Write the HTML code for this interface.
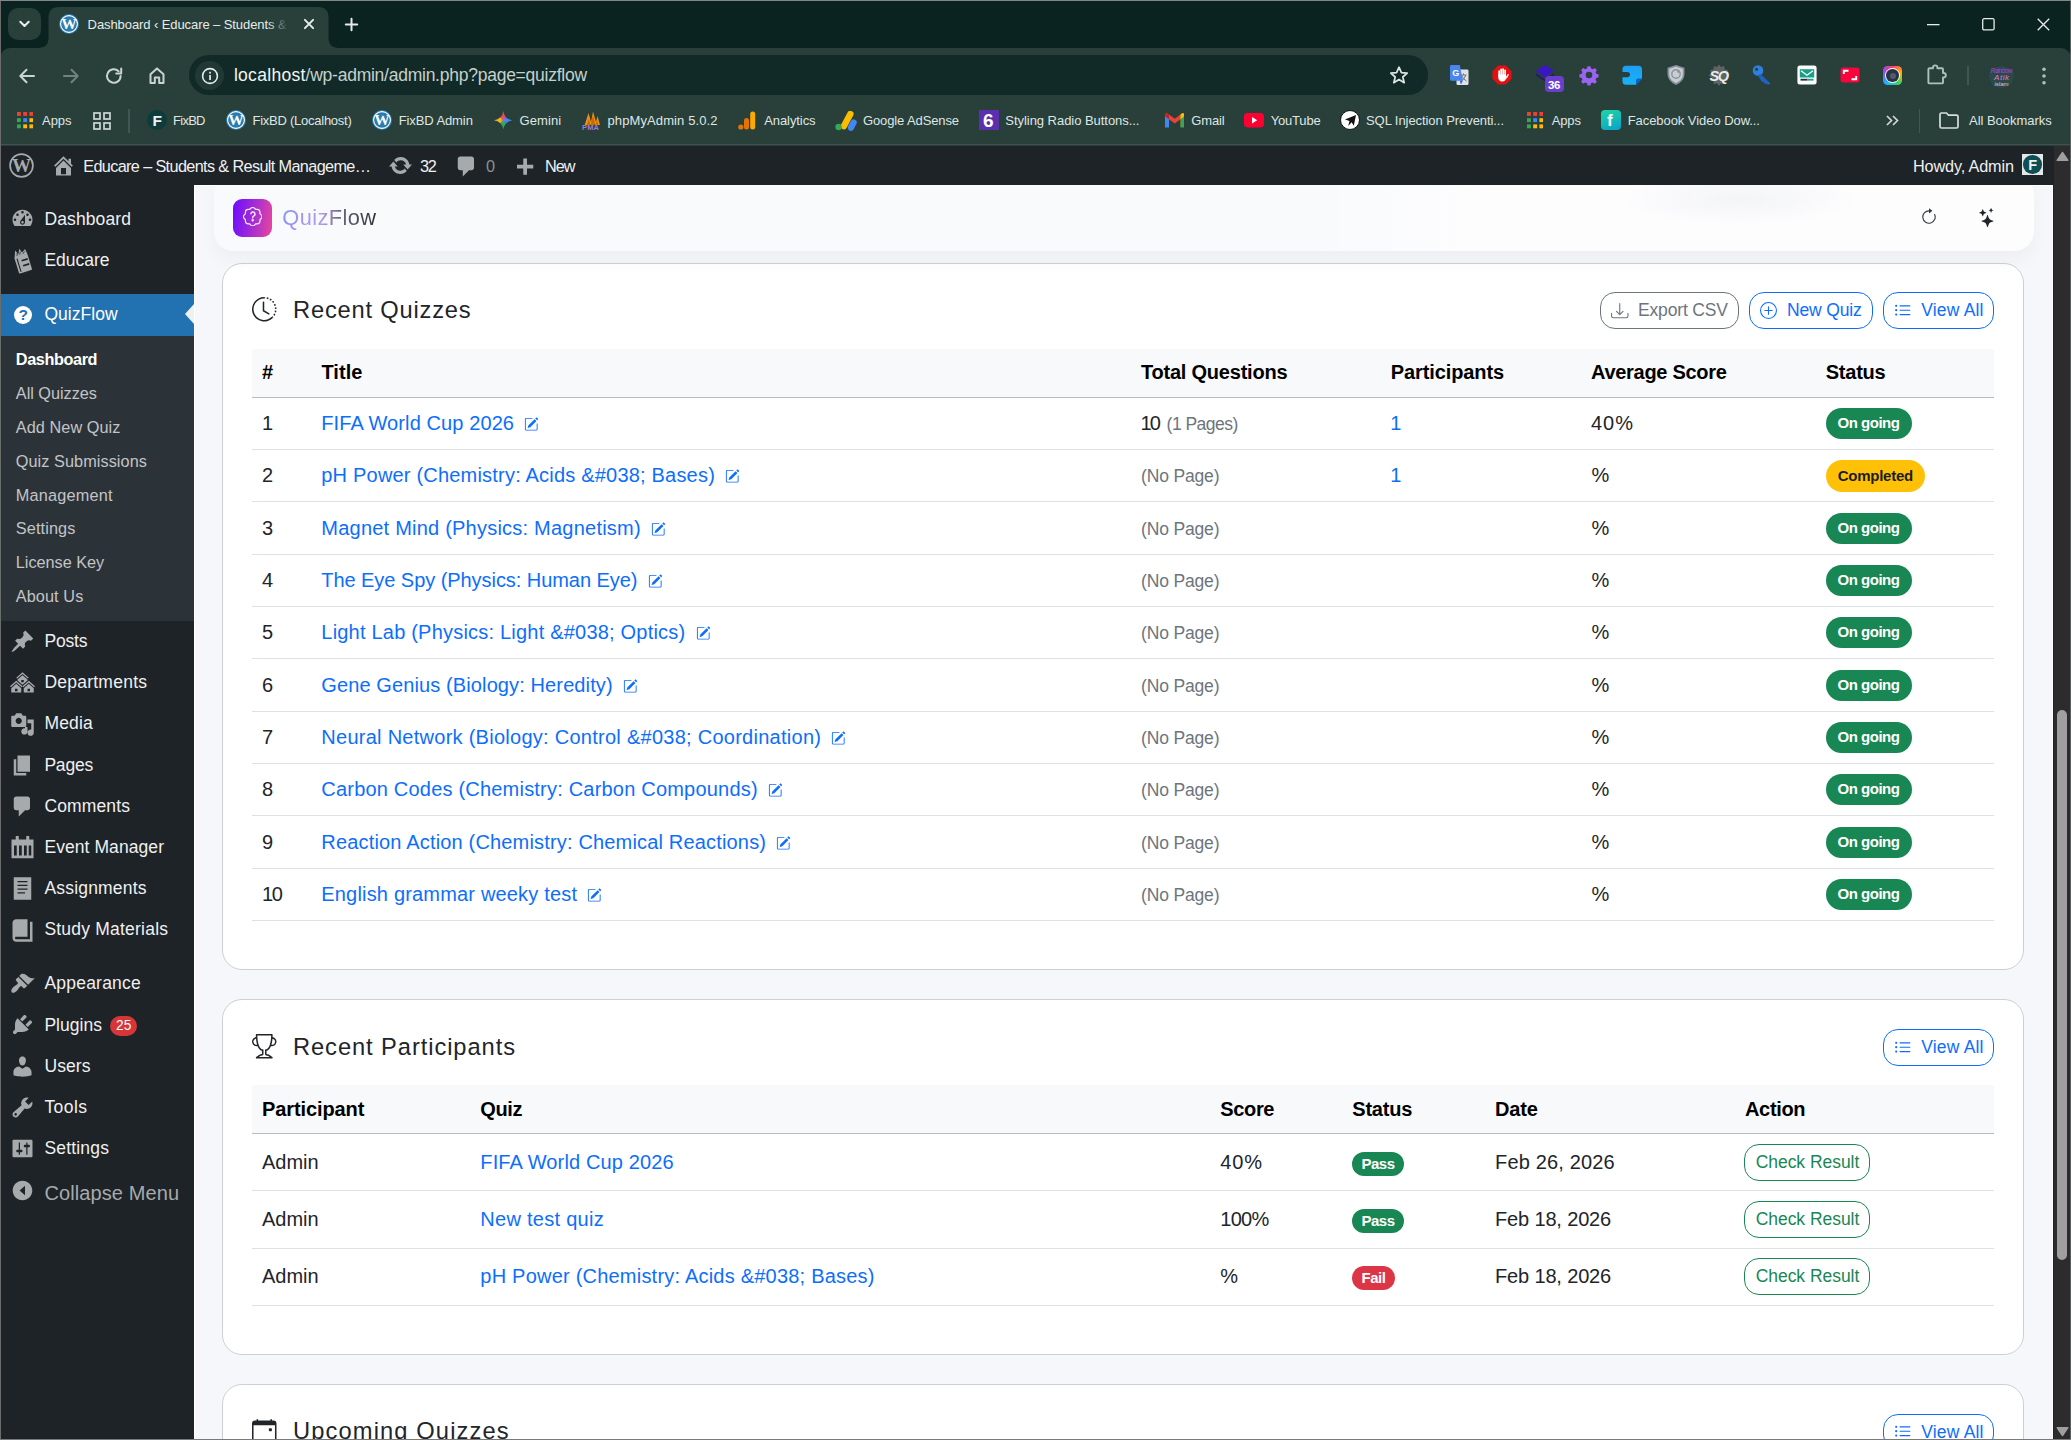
<!DOCTYPE html>
<html><head><meta charset="utf-8"><title>Dashboard</title><style>
html,body{margin:0;padding:0;}
body{width:2071px;height:1440px;overflow:hidden;position:relative;background:#f6f7fb;font-family:"Liberation Sans",sans-serif;}
.t{position:absolute;white-space:pre;line-height:0;font-family:"Liberation Sans",sans-serif;}
.b{position:absolute;box-sizing:border-box;}
</style></head><body>
<div class="b" style="left:0.00px;top:0.00px;width:2071.00px;height:70.00px;background:#0b2320;"></div>
<div class="b" style="left:0.00px;top:0.00px;width:2071.00px;height:1.00px;background:#808786;"></div>
<div class="b" style="left:0.00px;top:48.00px;width:2071.00px;height:98.00px;background:#283f3a;border-radius:10px 10px 0 0;"></div>
<div class="b" style="left:0.00px;top:144.00px;width:2071.00px;height:1.00px;background:#454f4d;"></div>
<div class="b" style="left:8.00px;top:8.00px;width:33.00px;height:32.00px;background:#283f3a;border-radius:10px;"></div>
<svg class="b" style="left:16.00px;top:16.00px;" width="17" height="16" viewBox="0 0 17 16"><path d="M4.300 5.800 L8.500 10 L12.700 5.800" fill="none" stroke="#e6ecea" stroke-width="2.100" stroke-linecap="round" stroke-linejoin="round"/></svg>
<svg class="b" style="left:38.00px;top:7.00px;" width="301" height="41" viewBox="0 0 301 41"><path d="M0 41 Q10.5 41 10.5 30.5 L10.5 10.5 Q10.5 0 21 0 L280 0 Q290.5 0 290.5 10.5 L290.5 30.5 Q290.5 41 301 41 Z" fill="#283f3a"/></svg>
<svg class="b" style="left:58.50px;top:14.00px;" width="20" height="20" viewBox="0 0 20 20"><circle cx="10" cy="10" r="10" fill="#2a7cb0"/><circle cx="10" cy="10" r="8.4" fill="none" stroke="#fff" stroke-width="1.1"/><text x="10" y="15.2" text-anchor="middle" font-family="Liberation Serif" font-weight="700" font-size="15.500" fill="#fff">W</text></svg>
<span id="t1" class="t" style="left:87.60px;top:24.50px;font-size:13.00px;color:#e6ecea;letter-spacing:-0.085px;">Dashboard ‹ Educare – Students &amp;</span>
<div class="b" style="left:268px;top:12px;width:24px;height:26px;background:linear-gradient(90deg,rgba(40,63,58,0),#283f3a 85%);"></div>
<svg class="b" style="left:302.70px;top:18.00px;" width="12" height="12" viewBox="0 0 12 12"><path d="M1.900 1.900 L10.100 10.100 M10.100 1.900 L1.900 10.100" stroke="#e6ecea" stroke-width="2" stroke-linecap="round"/></svg>
<svg class="b" style="left:344.00px;top:16.50px;" width="15" height="15" viewBox="0 0 15 15"><path d="M7.500 1.800 V13.200 M1.800 7.500 H13.200" stroke="#e6ecea" stroke-width="2" stroke-linecap="round"/></svg>
<svg class="b" style="left:1927.00px;top:23.50px;" width="13" height="2" viewBox="0 0 13 2"><rect width="12.5" height="1.3" fill="#e6ecea"/></svg>
<svg class="b" style="left:1981.50px;top:18.00px;" width="13" height="13" viewBox="0 0 13 13"><rect x="0.7" y="0.7" width="11.4" height="11.2" rx="1.5" fill="none" stroke="#e6ecea" stroke-width="1.3"/></svg>
<svg class="b" style="left:2036.50px;top:18.00px;" width="13" height="13" viewBox="0 0 13 13"><path d="M0.7 0.7 L12.2 12.2 M12.2 0.7 L0.7 12.2" stroke="#e6ecea" stroke-width="1.3"/></svg>
<svg class="b" style="left:17.00px;top:65.50px;" width="20" height="20" viewBox="0 0 20 20"><path d="M17 10 H3.5 M9.5 3.8 L3.3 10 L9.5 16.2" fill="none" stroke="#c9d4d1" stroke-width="2" stroke-linecap="round" stroke-linejoin="round"/></svg>
<svg class="b" style="left:61.00px;top:65.50px;" width="20" height="20" viewBox="0 0 20 20"><path d="M3 10 H16.5 M10.5 3.8 L16.7 10 L10.5 16.2" fill="none" stroke="#6f837f" stroke-width="2" stroke-linecap="round" stroke-linejoin="round"/></svg>
<svg class="b" style="left:104.00px;top:65.50px;" width="20" height="20" viewBox="0 0 20 20"><path d="M16.6 10 A6.8 6.8 0 1 1 14.6 5.2" fill="none" stroke="#c9d4d1" stroke-width="2" stroke-linecap="round"/><path d="M17.2 2.6 V7.6 H12.2" fill="none" stroke="#c9d4d1" stroke-width="2" stroke-linecap="round" stroke-linejoin="round"/></svg>
<svg class="b" style="left:147.00px;top:65.00px;" width="20" height="21" viewBox="0 0 20 21"><path d="M3.5 9.2 L10 3.4 L16.5 9.2 V18 H12.2 V12.4 H7.8 V18 H3.5 Z" fill="none" stroke="#c9d4d1" stroke-width="2" stroke-linejoin="round"/></svg>
<div class="b" style="left:189.00px;top:55.00px;width:1239.00px;height:40.00px;background:#112a27;border-radius:20px;"></div>
<div class="b" style="left:195.00px;top:61.20px;width:28.80px;height:28.80px;background:#213936;border-radius:14.4px;"></div>
<svg class="b" style="left:200.60px;top:66.60px;" width="18" height="18" viewBox="0 0 18 18"><circle cx="9" cy="9" r="7.4" fill="none" stroke="#e6ecea" stroke-width="1.6"/><rect x="8.2" y="8" width="1.7" height="5" fill="#e6ecea"/><rect x="8.2" y="4.8" width="1.7" height="1.8" fill="#e6ecea"/></svg>
<span id="t2" class="t" style="left:233.90px;top:74.74px;font-size:17.50px;color:#f3f6f5;letter-spacing:0.303px;">localhost</span>
<span id="t3" class="t" style="left:305.60px;top:74.74px;font-size:17.50px;color:#c5d0cd;letter-spacing:-0.248px;">/wp-admin/admin.php?page=quizflow</span>
<svg class="b" style="left:1388.50px;top:64.50px;" width="20" height="20" viewBox="0 0 20 20"><path d="M10 2.2 L12.4 7.6 L18.2 8.1 L13.8 12 L15.2 17.7 L10 14.6 L4.8 17.7 L6.2 12 L1.8 8.1 L7.6 7.6 Z" fill="none" stroke="#dfe6e4" stroke-width="1.7" stroke-linejoin="round"/></svg>
<svg class="b" style="left:1448.00px;top:64.00px;" width="22" height="22" viewBox="0 0 22 22"><rect x="8.500" y="5.500" width="12" height="15.500" rx="1.300" fill="#dfe3e8"/><path d="M12.500 11 H18.500 M15.500 9.500 V11 M13.500 11 Q14.500 15 18.500 17 M17.800 11 Q16.500 15.500 13 17" stroke="#6b7280" stroke-width="1" fill="none"/><path d="M2 2.300 Q2 1 3.300 1 H11.800 L14.800 16.800 H3.300 Q2 16.800 2 15.500 Z" fill="#4a86f0"/><path d="M11.800 16.800 L14.800 16.800 L13 20.500Z" fill="#3367d6"/><text x="7.700" y="12.300" text-anchor="middle" font-family="Liberation Sans" font-weight="700" font-size="9" fill="#fff">G</text></svg>
<svg class="b" style="left:1491.30px;top:64.00px;" width="22" height="22" viewBox="0 0 22 22"><path d="M7.200 1.500 H14.800 L20.500 7.200 V14.800 L14.800 20.500 H7.200 L1.500 14.800 V7.200 Z" fill="#e30f10"/><g fill="#fff"><rect x="7.300" y="6.200" width="1.700" height="7" rx=".85"/><rect x="9.300" y="4.600" width="1.700" height="8" rx=".85"/><rect x="11.300" y="4.300" width="1.700" height="8" rx=".85"/><rect x="13.300" y="5.400" width="1.700" height="8" rx=".85"/><path d="M7.300 10.500 H15 V13.500 Q15 17.600 11.200 17.600 Q8.500 17.600 7.300 14.500Z"/><path d="M15 12.600 L16.600 10.300 Q17.400 9.500 18 10.300 L15.600 15.200Z"/></g></svg>
<svg class="b" style="left:1533.50px;top:64.00px;" width="22" height="22" viewBox="0 0 22 22"><path d="M11 1 L20 7 L11 13 L2 7 Z" fill="#3b16c9"/><path d="M2 9.5 L11 15.5 L20 9.5 L20 11 L11 17.5 L2 11 Z" fill="#24107e"/></svg>
<div class="b" style="left:1545.00px;top:75.50px;width:18.50px;height:16.50px;background:#6a3fd0;border-radius:4px;"></div>
<span id="t4" class="t" style="left:1548.00px;top:84.62px;font-size:11.50px;color:#fff;font-weight:700;letter-spacing:-0.297px;">36</span>
<svg class="b" style="left:1578.00px;top:64.00px;" width="22" height="22" viewBox="0 0 22 22"><path d="M11 1.2 l1.6 0 l.7 2.6 l1.9 .8 l2.3 -1.4 l2.3 2.3 l-1.4 2.3 l.8 1.9 l2.6 .7 l0 3.2 l-2.6 .7 l-.8 1.9 l1.4 2.3 l-2.3 2.3 l-2.3 -1.4 l-1.9 .8 l-.7 2.6 l-3.2 0 l-.7 -2.6 l-1.9 -.8 l-2.3 1.4 l-2.3 -2.3 l1.4 -2.3 l-.8 -1.9 l-2.6 -.7 l0 -3.2 l2.6 -.7 l.8 -1.9 l-1.4 -2.3 l2.3 -2.3 l2.3 1.4 l1.9 -.8 l.7 -2.6 Z" fill="#9a63f0" transform="translate(1.2 1.2) scale(.89)"/><circle cx="11" cy="11" r="3.3" fill="#283f3a"/></svg>
<svg class="b" style="left:1621.00px;top:64.00px;" width="22" height="22" viewBox="0 0 22 22"><defs><linearGradient id="bl" x1="0" y1="0" x2="0" y2="1"><stop offset="0" stop-color="#1f9df6"/><stop offset="1" stop-color="#17b4f4"/></linearGradient></defs><path d="M5 1.800 H17.500 Q21 1.800 21 5.300 V14.500 L15 20.700 H5 Q1.500 20.700 1.500 17.200 V13.200 H6.300 Q9 13.200 9 10.600 Q9 8 6.300 8 H1.500 V5.300 Q1.500 1.800 5 1.800Z" fill="url(#bl)"/><path d="M21 14.500 L15 20.700 V16.500 Q15 14.500 17 14.500Z" fill="#0b5fd0"/></svg>
<svg class="b" style="left:1665.00px;top:64.00px;" width="22" height="22" viewBox="0 0 22 22"><path d="M11 1 L19.5 3.8 V10 Q19.5 17 11 21 Q2.5 17 2.5 10 V3.8 Z" fill="#8a939c"/><path d="M11 2.8 L17.8 5 V10 Q17.8 15.8 11 19.1 Q4.2 15.8 4.2 10 V5 Z" fill="#c9ced4"/><circle cx="11" cy="10" r="4.2" fill="none" stroke="#8a939c" stroke-width="1.4"/><circle cx="13.6" cy="7.6" r="1.4" fill="#8a939c"/></svg>
<svg class="b" style="left:1708.00px;top:64.00px;" width="22" height="22" viewBox="0 0 22 22"><path d="M11 .5 l2 2.6 l3.2 -1 l.4 3.3 l3.3 .6 l-1.2 3.1 l2.6 2.1 l-2.6 2.1 l1.2 3.1 l-3.3 .6 l-.4 3.3 l-3.2 -1 l-2 2.6 l-2 -2.6 l-3.2 1 l-.4 -3.3 l-3.3 -.6 l1.2 -3.1 l-2.6 -2.1 l2.6 -2.1 l-1.2 -3.1 l3.3 -.6 l.4 -3.3 l3.2 1 Z" fill="#5d6461"/></svg>
<span id="t5" class="t" style="left:1709.50px;top:76.18px;font-size:14.50px;color:#e8ecea;font-weight:700;letter-spacing:-1.453px;font-style:italic;">SQ</span>
<svg class="b" style="left:1751.00px;top:64.00px;" width="22" height="22" viewBox="0 0 22 22"><circle cx="7" cy="6.5" r="5.3" fill="#2f7fe0"/><circle cx="5.6" cy="5.2" r="1.5" fill="#283f3a"/><path d="M9.5 10 L19.5 19.5 L17 21 L15.6 19.6 L14.2 20.4 L12.8 18 L11.2 18.2 L6.8 11.6 Z" fill="#1f62c0"/></svg>
<svg class="b" style="left:1795.50px;top:64.00px;" width="22" height="22" viewBox="0 0 22 22"><rect x="1.400" y="1.400" width="19.200" height="19.200" rx="2.500" fill="#fbfbfb"/><rect x="3.800" y="5.200" width="14.400" height="8.300" fill="#17a085"/><path d="M5 6.800 L11 11.300 L17 6.800" fill="none" stroke="#fff" stroke-width="1.300"/><rect x="4.500" y="14.800" width="7" height="1.800" fill="#1f2e4a"/><rect x="11.500" y="14.800" width="6" height="1.800" fill="#17a085"/></svg>
<svg class="b" style="left:1838.50px;top:64.00px;" width="22" height="22" viewBox="0 0 22 22"><rect x="1.500" y="3.400" width="19.100" height="15.200" rx="2.500" fill="#f5063c"/><path d="M4.800 10 V6.800 H9.500 M17.200 12 V15.300 H12.500" fill="none" stroke="#fff" stroke-width="1.900"/></svg>
<div class="b" style="left:1883px;top:66px;width:19px;height:19px;border-radius:4.500px;background:conic-gradient(#ff3d6e,#ffb300,#38d36b,#19b5fe,#8a4dff,#ff3d6e);"></div>
<div class="b" style="left:1885.00px;top:68.00px;width:15.00px;height:15.00px;background:#fff;border-radius:7.500px;"></div>
<div class="b" style="left:1886.30px;top:69.30px;width:12.40px;height:12.40px;background:#2b3340;border-radius:6.200px;"></div>
<div class="b" style="left:1889.50px;top:72.50px;width:6.00px;height:6.00px;background:#4d5c70;border-radius:3px;"></div>
<svg class="b" style="left:1924.70px;top:64.00px;" width="22" height="22" viewBox="0 0 22 22"><path d="M8 4.2 V3.6 Q8 1.4 10.2 1.4 T12.4 3.6 V4.2 H17 Q18 4.2 18 5.2 V9 H18.6 Q20.8 9 20.8 11.2 T18.6 13.4 H18 V18.4 Q18 19.4 17 19.4 H4.4 Q3.4 19.4 3.4 18.4 V5.2 Q3.4 4.2 4.4 4.2 Z" fill="none" stroke="#a9c2bc" stroke-width="1.9" stroke-linejoin="round"/></svg>
<div class="b" style="left:1967.20px;top:66.00px;width:1.50px;height:19.00px;background:#3d5651;"></div>
<div class="b" style="left:1989.00px;top:65.50px;width:25.00px;height:22.00px;background:#2b4a47;border-radius:12px 12px 12px 12px / 9px 9px 13px 13px;"></div>
<span id="t6" class="t" style="left:1990.50px;top:71.25px;font-size:6.50px;color:#b23fd6;letter-spacing:-0.549px;font-style:italic;">Rainbow</span>
<span id="t7" class="t" style="left:1994.00px;top:77.73px;font-size:8.00px;color:#d87fd0;letter-spacing:0.552px;font-style:italic;">Atik</span>
<span id="t8" class="t" style="left:1994.50px;top:84.42px;font-size:6.00px;color:#e0c0e8;letter-spacing:-0.004px;font-style:italic;">islam</span>
<svg class="b" style="left:2041.20px;top:64.00px;" width="6" height="22" viewBox="0 0 6 22"><circle cx="3" cy="5.300" r="1.800" fill="#a9c2bc"/><circle cx="3" cy="12" r="1.800" fill="#a9c2bc"/><circle cx="3" cy="18.800" r="1.800" fill="#a9c2bc"/></svg>
<svg class="b" style="left:17.00px;top:112.20px;" width="16.4" height="16.4" viewBox="0 0 16.4 16.4"><rect x="0" y="0" width="3.9" height="3.9" fill="#ea4335"/><rect x="6.2" y="0" width="3.9" height="3.9" fill="#ea4335"/><rect x="12.4" y="0" width="3.9" height="3.9" fill="#ea4335"/><rect x="0" y="6.2" width="3.9" height="3.9" fill="#34a853"/><rect x="6.2" y="6.2" width="3.9" height="3.9" fill="#4285f4"/><rect x="12.4" y="6.2" width="3.9" height="3.9" fill="#fbbc05"/><rect x="0" y="12.4" width="3.9" height="3.9" fill="#34a853"/><rect x="6.2" y="12.4" width="3.9" height="3.9" fill="#fbbc05"/><rect x="12.4" y="12.4" width="3.9" height="3.9" fill="#fbbc05"/></svg>
<span id="t9" class="t" style="left:42.00px;top:120.50px;font-size:13.00px;color:#dfe6e4;letter-spacing:-0.014px;">Apps</span>
<svg class="b" style="left:92.50px;top:111.50px;" width="18" height="18" viewBox="0 0 18 18"><g fill="none" stroke="#cfd8d5" stroke-width="1.7"><rect x="1" y="1" width="6" height="6"/><rect x="11" y="1" width="6" height="6"/><rect x="1" y="11" width="6" height="6"/><rect x="11" y="11" width="6" height="6"/></g></svg>
<div class="b" style="left:128.00px;top:108.50px;width:1.50px;height:24.00px;background:#3f5752;"></div>
<div class="b" style="left:147.00px;top:110.40px;width:20.00px;height:20.00px;background:#0e3b3c;border-radius:10px;"></div>
<span id="t10" class="t" style="left:152.50px;top:120.63px;font-size:15.50px;color:#eef3f2;font-weight:700;">F</span>
<span id="t11" class="t" style="left:173.00px;top:120.50px;font-size:13.00px;color:#dfe6e4;letter-spacing:-0.723px;">FixBD</span>
<svg class="b" style="left:225.70px;top:110.40px;" width="20" height="20" viewBox="0 0 20 20"><circle cx="10" cy="10" r="10" fill="#2a7cb0"/><circle cx="10" cy="10" r="8.4" fill="none" stroke="#fff" stroke-width="1.1"/><text x="10" y="15.2" text-anchor="middle" font-family="Liberation Serif" font-weight="700" font-size="15.500" fill="#fff">W</text></svg>
<span id="t12" class="t" style="left:252.50px;top:120.50px;font-size:13.00px;color:#dfe6e4;letter-spacing:-0.251px;">FixBD (Localhost)</span>
<svg class="b" style="left:372.00px;top:110.40px;" width="20" height="20" viewBox="0 0 20 20"><circle cx="10" cy="10" r="10" fill="#2a7cb0"/><circle cx="10" cy="10" r="8.4" fill="none" stroke="#fff" stroke-width="1.1"/><text x="10" y="15.2" text-anchor="middle" font-family="Liberation Serif" font-weight="700" font-size="15.500" fill="#fff">W</text></svg>
<span id="t13" class="t" style="left:398.70px;top:120.50px;font-size:13.00px;color:#dfe6e4;letter-spacing:-0.094px;">FixBD Admin</span>
<svg class="b" style="left:493.70px;top:111.20px;" width="18.6" height="18.6" viewBox="0 0 20 20"><defs><clipPath id="gst"><path d="M10 0 Q11.300 8.700 20 10 Q11.300 11.300 10 20 Q8.700 11.300 0 10 Q8.700 8.700 10 0Z"/></clipPath></defs><g clip-path="url(#gst)"><path d="M0 0 H20 L10 10Z" fill="#ec4a5a"/><path d="M20 0 V20 L10 10Z" fill="#3f86f5"/><path d="M20 20 H0 L10 10Z" fill="#2fa85a"/><path d="M0 20 V0 L10 10Z" fill="#f6b418"/><circle cx="10" cy="10" r="2.600" fill="#8a7fd8" opacity=".55"/></g><path d="M10 1.500 Q11 8.800 18.500 10 Q11 11.200 10 18.500 Q9 11.200 1.500 10 Q9 8.800 10 1.500Z" fill="none"/></svg>
<span id="t14" class="t" style="left:519.60px;top:120.50px;font-size:13.00px;color:#dfe6e4;letter-spacing:0.083px;">Gemini</span>
<svg class="b" style="left:581.00px;top:110.00px;" width="21" height="21" viewBox="0 0 21 21"><path d="M3 17 L7.5 3 L10 12 L12 1.5 L15 12 L16.5 6 L19.5 17Z" fill="#f29111"/><path d="M5.5 17 L7.8 8.5 L9.6 15 L12 5.5 L14.4 15 L16.2 10.5 L17.8 17Z" fill="#c96a07"/><rect x="1" y="15" width="19" height="5.2" fill="#293f3b"/></svg>
<span id="t15" class="t" style="left:582.00px;top:127.60px;font-size:7.50px;color:#9a7fd0;font-weight:700;letter-spacing:0.164px;">PMA</span>
<span id="t16" class="t" style="left:607.50px;top:120.50px;font-size:13.00px;color:#dfe6e4;letter-spacing:0.106px;">phpMyAdmin 5.0.2</span>
<svg class="b" style="left:738.00px;top:111.00px;" width="18" height="19" viewBox="0 0 18 19"><rect x="12.2" y="0.5" width="5" height="18" rx="2.5" fill="#f9ab00"/><rect x="6" y="7" width="5" height="11.5" rx="2.5" fill="#e37400"/><circle cx="2.8" cy="16" r="2.6" fill="#e37400"/></svg>
<span id="t17" class="t" style="left:764.20px;top:120.50px;font-size:13.00px;color:#dfe6e4;letter-spacing:-0.079px;">Analytics</span>
<svg class="b" style="left:835.00px;top:110.50px;" width="22" height="20" viewBox="0 0 22 20"><rect x="9" y="-1" width="6.4" height="20" rx="3.2" fill="#fbbc04" transform="rotate(28 12 9)"/><rect x="14.2" y="8" width="6.2" height="12" rx="3.1" fill="#4285f4" transform="rotate(28 17 14)"/><circle cx="3.6" cy="16" r="3.2" fill="#34a853"/></svg>
<span id="t18" class="t" style="left:863.00px;top:120.50px;font-size:13.00px;color:#dfe6e4;letter-spacing:-0.121px;">Google AdSense</span>
<div class="b" style="left:979.00px;top:110.40px;width:20.00px;height:20.00px;background:#5b2fae;"></div>
<span id="t19" class="t" style="left:983.00px;top:120.72px;font-size:19.00px;color:#fff;font-weight:700;">6</span>
<span id="t20" class="t" style="left:1005.30px;top:120.50px;font-size:13.00px;color:#dfe6e4;letter-spacing:-0.041px;">Styling Radio Buttons...</span>
<svg class="b" style="left:1164.50px;top:113.00px;" width="19.5" height="15" viewBox="0 0 19.5 15"><path d="M0 2 V14 H4 V6.2 L9.75 10.5 L15.5 6.2 V14 H19.5 V2 Q19.5 0 17.5 0 L9.75 5.8 L2 0 Q0 0 0 2Z" fill="#ea4335"/><rect x="0" y="3" width="4" height="11.5" fill="#4285f4"/><rect x="15.5" y="3" width="4" height="11.5" fill="#34a853"/><path d="M0 2 Q0 0 2 0 L4 1.5 V6.2 L0 3.2Z" fill="#c5221f"/><path d="M19.5 2 Q19.5 0 17.5 0 L15.5 1.5 V6.2 L19.5 3.2Z" fill="#fbbc04"/></svg>
<span id="t21" class="t" style="left:1191.20px;top:120.50px;font-size:13.00px;color:#dfe6e4;letter-spacing:-0.113px;">Gmail</span>
<svg class="b" style="left:1244.30px;top:113.20px;" width="20" height="14.4" viewBox="0 0 20 14.4"><rect width="20" height="14.4" rx="3.6" fill="#ff0033"/><path d="M8 4 L13.2 7.2 L8 10.4Z" fill="#fff"/></svg>
<span id="t22" class="t" style="left:1270.70px;top:120.50px;font-size:13.00px;color:#dfe6e4;letter-spacing:-0.182px;">YouTube</span>
<div class="b" style="left:1339.80px;top:110.40px;width:20.00px;height:20.00px;background:#fff;border-radius:10px;border:1.5px solid #111;"></div>
<svg class="b" style="left:1343.50px;top:114.00px;" width="13" height="13" viewBox="0 0 13 13"><path d="M12 1 L1 5.5 L5.5 7 L4.2 12 L7.6 8.2 L9.8 11.8Z" fill="#111"/></svg>
<span id="t23" class="t" style="left:1366.00px;top:120.50px;font-size:13.00px;color:#dfe6e4;letter-spacing:-0.071px;">SQL Injection Preventi...</span>
<svg class="b" style="left:1526.70px;top:112.20px;" width="16.4" height="16.4" viewBox="0 0 16.4 16.4"><rect x="0" y="0" width="3.9" height="3.9" fill="#ea4335"/><rect x="6.2" y="0" width="3.9" height="3.9" fill="#ea4335"/><rect x="12.4" y="0" width="3.9" height="3.9" fill="#ea4335"/><rect x="0" y="6.2" width="3.9" height="3.9" fill="#34a853"/><rect x="6.2" y="6.2" width="3.9" height="3.9" fill="#4285f4"/><rect x="12.4" y="6.2" width="3.9" height="3.9" fill="#fbbc05"/><rect x="0" y="12.4" width="3.9" height="3.9" fill="#34a853"/><rect x="6.2" y="12.4" width="3.9" height="3.9" fill="#fbbc05"/><rect x="12.4" y="12.4" width="3.9" height="3.9" fill="#fbbc05"/></svg>
<span id="t24" class="t" style="left:1551.70px;top:120.50px;font-size:13.00px;color:#dfe6e4;letter-spacing:-0.114px;">Apps</span>
<div class="b" style="left:1600.7px;top:110.4px;width:20px;height:20px;border-radius:4px;background:linear-gradient(160deg,#1ed6a4,#0aa1c9);"></div>
<span id="t25" class="t" style="left:1607.00px;top:120.61px;font-size:17.00px;color:#fff;font-weight:700;">f</span>
<span id="t26" class="t" style="left:1627.70px;top:120.50px;font-size:13.00px;color:#dfe6e4;letter-spacing:-0.058px;">Facebook Video Dow...</span>
<svg class="b" style="left:1885.50px;top:115.00px;" width="13" height="11" viewBox="0 0 13 11"><path d="M1 1 L5.5 5.5 L1 10 M7 1 L11.5 5.5 L7 10" fill="none" stroke="#cfd8d5" stroke-width="1.7"/></svg>
<div class="b" style="left:1918.70px;top:108.50px;width:1.50px;height:24.00px;background:#3f5752;"></div>
<svg class="b" style="left:1939.00px;top:112.00px;" width="20" height="17" viewBox="0 0 20 17"><path d="M1 2.5 Q1 1 2.5 1 H7.5 L9.5 3.2 H17.5 Q19 3.2 19 4.7 V14.5 Q19 16 17.5 16 H2.5 Q1 16 1 14.5Z" fill="none" stroke="#d6dfdc" stroke-width="1.7" stroke-linejoin="round"/></svg>
<span id="t27" class="t" style="left:1969.00px;top:120.50px;font-size:13.00px;color:#dfe6e4;letter-spacing:-0.032px;">All Bookmarks</span>
<div class="b" style="left:0.00px;top:146.00px;width:2071.00px;height:39.00px;background:#1d2327;"></div>
<div class="b" style="left:194.00px;top:185.00px;width:1859.00px;height:1255.00px;background:#fff;"></div>
<div class="b" style="left:195.00px;top:186.00px;width:1857.00px;height:1253.00px;background:#f6f7fb;"></div>
<div class="b" style="left:0.00px;top:185.00px;width:194.00px;height:1255.00px;background:#1d2327;"></div>
<div class="b" style="left:0.00px;top:294.00px;width:194.00px;height:42.00px;background:#2271b1;"></div>
<div class="b" style="left:0.00px;top:336.00px;width:194.00px;height:284.70px;background:#2c3338;"></div>
<svg class="b" style="left:185.00px;top:304.00px;" width="9" height="20" viewBox="0 0 9 20"><path d="M9 0 L0 10 L9 20Z" fill="#f0f0f1"/></svg>
<svg class="b" style="left:9.00px;top:152.50px;" width="25" height="25" viewBox="0 0 25 25"><circle cx="12.5" cy="12.5" r="11.4" fill="none" stroke="#a7aaad" stroke-width="1.7"/><text x="12.5" y="19" text-anchor="middle" font-family="Liberation Serif" font-weight="700" font-size="19" fill="#a7aaad">W</text></svg>
<svg class="b" style="left:51.40px;top:153.40px;" width="25" height="25" viewBox="0 0 20 20"><path fill-rule="evenodd" d="M16 8.500l1.530 1.530-1.060 1.060L10 4.620l-6.470 6.470-1.060-1.060L10 2.500l4 4v-2h2v4zm-6-2.460l6 5.990V18H4v-5.970zM12 17v-5H8v5h4z" fill="#a7aaad"/></svg>
<span id="t28" class="t" style="left:83.20px;top:165.67px;font-size:16.25px;color:#f0f0f1;letter-spacing:-0.637px;">Educare – Students &amp; Result Manageme…</span>
<svg class="b" style="left:388.00px;top:152.50px;" width="25" height="25" viewBox="0 0 20 20"><path d="M10.200 3.280c3.530 0 6.430 2.610 6.920 6h2.080l-3.500 4-3.500-4h2.320c-.450-1.970-2.210-3.450-4.320-3.450-1.450 0-2.730.710-3.540 1.780L4.950 5.660C6.230 4.200 8.110 3.280 10.200 3.280zm-.400 13.440c-3.520 0-6.430-2.610-6.920-6H.800l3.500-4c1.170 1.330 2.330 2.670 3.500 4H5.480c.450 1.970 2.210 3.450 4.320 3.450 1.450 0 2.730-.710 3.540-1.780l1.710 1.950c-1.280 1.460-3.150 2.380-5.250 2.380z" fill="#a7aaad"/></svg>
<span id="t29" class="t" style="left:420.00px;top:165.67px;font-size:16.25px;color:#f0f0f1;letter-spacing:-1.278px;">32</span>
<svg class="b" style="left:454.40px;top:153.60px;" width="25" height="25" viewBox="0 0 20 20"><path d="M5 2h9c1.100 0 2 .900 2 2v7c0 1.100-.900 2-2 2h-2l-5 5v-5H5c-1.100 0-2-.900-2-2V4c0-1.100.900-2 2-2z" fill="#a7aaad"/></svg>
<span id="t30" class="t" style="left:486.00px;top:165.67px;font-size:16.25px;color:#8c9196;">0</span>
<svg class="b" style="left:512.00px;top:155.70px;" width="25" height="25" viewBox="0 0 20 20"><path d="M17 7v3h-5v5H9v-5H4V7h5V2h3v5h5z" fill="#a7aaad"/></svg>
<span id="t31" class="t" style="left:545.00px;top:165.67px;font-size:16.25px;color:#f0f0f1;letter-spacing:-1.058px;">New</span>
<span id="t32" class="t" style="left:1913.00px;top:165.67px;font-size:16.25px;color:#f0f0f1;letter-spacing:-0.152px;">Howdy, Admin</span>
<div class="b" style="left:2022.00px;top:154.00px;width:21.00px;height:21.00px;background:#e6e6e9;"></div>
<div class="b" style="left:2023.30px;top:155.30px;width:18.40px;height:18.40px;background:#0c4f55;border-radius:9.200px;"></div>
<span id="t33" class="t" style="left:2028.30px;top:165.28px;font-size:14.50px;color:#eef1f1;font-weight:700;">F</span>
<span id="t34" class="t" style="left:44.40px;top:219.44px;font-size:17.50px;color:#f0f0f1;letter-spacing:0.122px;">Dashboard</span>
<span id="t35" class="t" style="left:44.40px;top:259.94px;font-size:17.50px;color:#f0f0f1;letter-spacing:0.002px;">Educare</span>
<span id="t36" class="t" style="left:44.40px;top:313.64px;font-size:17.50px;color:#fff;letter-spacing:0.038px;">QuizFlow</span>
<span id="t37" class="t" style="left:15.80px;top:358.97px;font-size:16.25px;color:#fff;font-weight:700;letter-spacing:-0.399px;">Dashboard</span>
<span id="t38" class="t" style="left:15.80px;top:392.87px;font-size:16.25px;color:#c3c4c7;letter-spacing:-0.008px;">All Quizzes</span>
<span id="t39" class="t" style="left:15.80px;top:426.77px;font-size:16.25px;color:#c3c4c7;letter-spacing:0.066px;">Add New Quiz</span>
<span id="t40" class="t" style="left:15.80px;top:460.67px;font-size:16.25px;color:#c3c4c7;letter-spacing:0.069px;">Quiz Submissions</span>
<span id="t41" class="t" style="left:15.80px;top:494.57px;font-size:16.25px;color:#c3c4c7;letter-spacing:0.205px;">Management</span>
<span id="t42" class="t" style="left:15.80px;top:528.47px;font-size:16.25px;color:#c3c4c7;letter-spacing:0.126px;">Settings</span>
<span id="t43" class="t" style="left:15.80px;top:562.37px;font-size:16.25px;color:#c3c4c7;letter-spacing:-0.013px;">License Key</span>
<span id="t44" class="t" style="left:15.80px;top:596.27px;font-size:16.25px;color:#c3c4c7;letter-spacing:0.094px;">About Us</span>
<span id="t45" class="t" style="left:44.40px;top:641.14px;font-size:17.50px;color:#f0f0f1;letter-spacing:-0.170px;">Posts</span>
<span id="t46" class="t" style="left:44.40px;top:682.44px;font-size:17.50px;color:#f0f0f1;letter-spacing:0.241px;">Departments</span>
<span id="t47" class="t" style="left:44.40px;top:723.14px;font-size:17.50px;color:#f0f0f1;letter-spacing:0.157px;">Media</span>
<span id="t48" class="t" style="left:44.40px;top:764.94px;font-size:17.50px;color:#f0f0f1;letter-spacing:-0.206px;">Pages</span>
<span id="t49" class="t" style="left:44.40px;top:806.14px;font-size:17.50px;color:#f0f0f1;letter-spacing:0.142px;">Comments</span>
<span id="t50" class="t" style="left:44.40px;top:847.34px;font-size:17.50px;color:#f0f0f1;letter-spacing:0.076px;">Event Manager</span>
<span id="t51" class="t" style="left:44.40px;top:888.14px;font-size:17.50px;color:#f0f0f1;letter-spacing:0.191px;">Assignments</span>
<span id="t52" class="t" style="left:44.40px;top:929.34px;font-size:17.50px;color:#f0f0f1;letter-spacing:0.214px;">Study Materials</span>
<span id="t53" class="t" style="left:44.40px;top:983.44px;font-size:17.50px;color:#f0f0f1;letter-spacing:0.223px;">Appearance</span>
<span id="t54" class="t" style="left:44.40px;top:1024.94px;font-size:17.50px;color:#f0f0f1;letter-spacing:0.032px;">Plugins</span>
<span id="t55" class="t" style="left:44.40px;top:1066.24px;font-size:17.50px;color:#f0f0f1;letter-spacing:0.099px;">Users</span>
<span id="t56" class="t" style="left:44.40px;top:1107.44px;font-size:17.50px;color:#f0f0f1;letter-spacing:0.435px;">Tools</span>
<span id="t57" class="t" style="left:44.40px;top:1148.14px;font-size:17.50px;color:#f0f0f1;letter-spacing:0.181px;">Settings</span>
<span id="t58" class="t" style="left:44.40px;top:1192.87px;font-size:20.00px;color:#a7aaad;letter-spacing:0.107px;">Collapse Menu</span>
<div class="b" style="left:110.20px;top:1015.90px;width:26.70px;height:20.50px;background:#d63638;border-radius:10.3px;"></div>
<span id="t59" class="t" style="left:116.00px;top:1026.44px;font-size:13.75px;color:#fff;letter-spacing:0.203px;">25</span>
<svg class="b" style="left:10.10px;top:206.20px;" width="25" height="25" viewBox="0 0 20 20"><path fill-rule="evenodd" d="M3.76 16h12.48c1.1-1.37 1.76-3.11 1.76-5 0-4.42-3.58-8-8-8s-8 3.58-8 8c0 1.89.66 3.63 1.76 5zM10 4c.55 0 1 .45 1 1s-.45 1-1 1-1-.45-1-1 .45-1 1-1zM6 6c.55 0 1 .45 1 1s-.45 1-1 1-1-.45-1-1 .45-1 1-1zm8 0c.55 0 1 .45 1 1s-.45 1-1 1-1-.45-1-1 .45-1 1-1zm-5.37 5.55L12 7v6c0 1.1-.9 2-2 2s-2-.9-2-2c0-.57.24-1.080.63-1.450zM4 10c.55 0 1 .45 1 1s-.45 1-1 1-1-.45-1-1 .45-1 1-1zm12 0c.55 0 1 .45 1 1s-.45 1-1 1-1-.45-1-1 .45-1 1-1zm-5 3c0-.55-.45-1-1-1s-1 .45-1 1 .45 1 1 1 1-.45 1-1z" fill="#a7aaad"/></svg>
<svg class="b" style="left:10.50px;top:247.00px;" width="24" height="28" viewBox="0 0 24 28"><g transform="rotate(-17 12 16)"><rect x="5.2" y="8" width="13.6" height="17.2" rx="1" fill="#a7aaad"/><path d="M5.6 8.500 L8 1.800 L10.200 6.200 L12.600 1.200 L14.200 5.800 L18 3.200 L18.800 8.500Z" fill="#a7aaad"/><path d="M8.300 7.600 L9.500 4.600 M11.400 7.200 L12.700 4.200 M14.600 7.200 L16.800 5.400" stroke="#1d2327" stroke-width=".7"/><rect x="7" y="10" width="1.100" height="14" fill="#1d2327"/><rect x="11.300" y="12.600" width="6.400" height="1.700" fill="#1d2327"/><rect x="11.300" y="17.800" width="6.400" height="1.700" fill="#1d2327"/></g></svg>
<div class="b" style="left:14.00px;top:306.00px;width:17.80px;height:17.80px;background:#fff;border-radius:9px;"></div>
<span id="t60" class="t" style="left:18.60px;top:314.93px;font-size:15.50px;color:#2271b1;font-weight:700;">?</span>
<svg class="b" style="left:10.10px;top:629.00px;" width="25" height="25" viewBox="0 0 20 20"><path fill-rule="evenodd" d="M10.44 3.02l1.82-1.82 6.36 6.35-1.83 1.82c-1.05-.68-2.48-.57-3.41.36l-.75.75c-.92.93-1.04 2.35-.35 3.41l-1.83 1.82-2.41-2.41-2.8 2.79c-.42.42-3.38 2.71-3.8 2.29s1.86-3.39 2.28-3.81l2.79-2.79L4.1 9.36l1.83-1.82c1.05.69 2.48.57 3.4-.36l.75-.75c.93-.92 1.05-2.35.36-3.41z" fill="#a7aaad"/></svg>
<svg class="b" style="left:10.10px;top:670.20px;" width="25" height="25" viewBox="0 0 20 20"><path fill-rule="evenodd" d="M14.27 6.87L10 3.14 5.73 6.87 5 6.14l5-4.38 5 4.380zM14 8.420l-4.05 3.430L6 8.380v-.74l4-3.500 4 3.500v.780zM11 9.700V8H9v1.700h2zm-1.730 4.030L5 10 .73 13.730 0 13l5-4.380L10 13zm10 0L15 10l-4.270 3.730L10 13l5-4.380L20 13zM5 11l4 3.500V18H1v-3.500zm10 0l4 3.500V18h-8v-3.500zm-9 6v-2H4v2h2zm10 0v-2h-2v2h2z" fill="#a7aaad"/></svg>
<svg class="b" style="left:10.10px;top:711.50px;" width="25" height="25" viewBox="0 0 20 20"><path fill-rule="evenodd" d="M13 11V4c0-.55-.45-1-1-1h-1.670L9 1H5L3.670 3H2c-.55 0-1 .45-1 1v7c0 .55.45 1 1 1h10c.55 0 1-.45 1-1zM7 4.500c1.380 0 2.500 1.120 2.500 2.500S8.380 9.500 7 9.500 4.500 8.380 4.500 7 5.620 4.500 7 4.500zM14 6h5v10.500c0 1.380-1.120 2.500-2.500 2.500S14 17.880 14 16.500s1.120-2.500 2.500-2.500c.17 0 .34.020.5.050V9h-3v6.500c0 1.380-1.120 2.500-2.500 2.500S9 16.880 9 15.500 10.120 13 11.500 13c.17 0 .34.020.5.050V12h2V6z" fill="#a7aaad"/></svg>
<svg class="b" style="left:10.10px;top:752.50px;" width="25" height="25" viewBox="0 0 20 20"><path fill-rule="evenodd" d="M6 15V2h10v13H6zm-1 1h8v2H3V5h2v11z" fill="#a7aaad"/></svg>
<svg class="b" style="left:10.10px;top:794.00px;" width="25" height="25" viewBox="0 0 20 20"><path fill-rule="evenodd" d="M5 2h9c1.100 0 2 .9 2 2v7c0 1.100-.9 2-2 2h-2l-5 5v-5H5c-1.100 0-2-.9-2-2V4c0-1.100.9-2 2-2z" fill="#a7aaad"/></svg>
<svg class="b" style="left:10.10px;top:835.00px;" width="25" height="25" viewBox="0 0 20 20"><path d="M1.200 3.600 H18.800 V18.600 H1.200Z" fill="#a7aaad"/><g fill="#a7aaad"><rect x="4.600" y="0.800" width="2.400" height="4"/><rect x="13" y="0.800" width="2.400" height="4"/></g><g fill="#1d2327"><rect x="3.200" y="8.400" width="2.200" height="8"/><rect x="7.200" y="8.400" width="2.200" height="8"/><rect x="11.200" y="8.400" width="2.200" height="8"/><rect x="15" y="8.400" width="2" height="8"/></g></svg>
<svg class="b" style="left:10.10px;top:876.20px;" width="25" height="25" viewBox="0 0 20 20"><path fill-rule="evenodd" d="M3 1v18h14V1H3zm9 13H6v-1h6v1zm2-3H6v-1h8v1zm0-3H6V7h8v1zm0-3H6V4h8v1z" fill="#a7aaad"/></svg>
<svg class="b" style="left:10.10px;top:917.50px;" width="25" height="25" viewBox="0 0 20 20"><path fill-rule="evenodd" d="M16 3h2v16H5c-1.660 0-3-1.340-3-3V4c0-1.660 1.340-3 3-3h9v14H5c-.55 0-1 .45-1 1s.45 1 1 1h11V3z" fill="#a7aaad"/></svg>
<svg class="b" style="left:10.10px;top:971.00px;" width="25" height="25" viewBox="0 0 20 20"><path fill-rule="evenodd" d="M14.480 11.060L7.410 3.990l1.500-1.500c.5-.56 2.300-.47 3.510.32 1.210.8 1.430 1.280 2.910 2.100 1.180.64 2.450 1.260 4.450.85zm-.71.71L6.700 4.700 4.930 6.470c-.39.39-.39 1.020 0 1.410l1.060 1.060c.39.39.39 1.030 0 1.420-.6.6-1.430 1.110-2.210 1.690-.35.26-.7.53-1.010.84C1.430 14.230.4 16.080 1.400 17.070c.99 1 2.840-.03 4.180-1.360.31-.31.58-.66.85-1.020.57-.78 1.080-1.610 1.690-2.210.39-.39 1.020-.39 1.410 0l1.060 1.060c.39.39 1.020.39 1.410 0z" fill="#a7aaad"/></svg>
<svg class="b" style="left:10.10px;top:1012.20px;" width="25" height="25" viewBox="0 0 20 20"><path fill-rule="evenodd" d="M13.110 4.360L9.870 7.600 8 5.730l3.240-3.240c.35-.34 1.050-.2 1.560.32.520.51.66 1.210.31 1.550zm-8 1.770l.91-1.120 9.010 9.010-1.190.84c-.71.71-2.630 1.160-3.820 1.160H6.140L4.900 17.260c-.59.59-1.540.59-2.120 0-.59-.58-.59-1.530 0-2.120L4 13.900v-3.880c0-1.190.4-3.180 1.110-3.890zm7.260 3.970l3.240-3.240c.34-.35 1.040-.21 1.550.31.520.51.66 1.210.31 1.550l-3.240 3.250z" fill="#a7aaad"/></svg>
<svg class="b" style="left:10.10px;top:1053.50px;" width="25" height="25" viewBox="0 0 20 20"><path fill-rule="evenodd" d="M10 9.250c-2.270 0-2.730-3.440-2.730-3.440C7 4.020 7.820 2 9.970 2c2.160 0 2.980 2.020 2.710 3.810 0 0-.41 3.440-2.680 3.440zm0 2.570L12.720 10c2.390 0 4.520 2.330 4.520 4.530v2.490s-3.650 1.130-7.240 1.130c-3.650 0-7.240-1.130-7.240-1.130v-2.490c0-2.250 1.940-4.480 4.470-4.480z" fill="#a7aaad"/></svg>
<svg class="b" style="left:10.10px;top:1094.80px;" width="25" height="25" viewBox="0 0 20 20"><path fill-rule="evenodd" d="M16.680 9.770c-1.340 1.340-3.300 1.670-4.950.99l-5.410 6.520c-.99.99-2.590.99-3.580 0s-.99-2.590 0-3.570l6.520-5.420c-.68-1.650-.35-3.610.99-4.950 1.280-1.280 3.120-1.620 4.720-1.060l-2.890 2.890 2.820 2.820 2.860-2.870c.53 1.580.18 3.390-1.080 4.650zM3.810 16.210c.4.39 1.040.39 1.430 0 .4-.4.4-1.040 0-1.430-.39-.4-1.030-.4-1.430 0-.39.39-.39 1.030 0 1.430z" fill="#a7aaad"/></svg>
<svg class="b" style="left:10.10px;top:1136.00px;" width="25" height="25" viewBox="0 0 20 20"><path fill-rule="evenodd" d="M18 16V4c0-.55-.45-1-1-1H3c-.55 0-1 .45-1 1v12c0 .55.45 1 1 1h14c.55 0 1-.45 1-1zM8 11h1c.55 0 1 .45 1 1s-.45 1-1 1H8v1.500c0 .28-.22.5-.5.5s-.5-.22-.5-.5V13H6c-.55 0-1-.45-1-1s.45-1 1-1h1V5.500c0-.28.22-.5.5-.5s.5.22.5.5V11zm5-2h-1c-.55 0-1-.45-1-1s.45-1 1-1h1V5.500c0-.28.22-.5.5-.5s.5.22.5.5V7h1c.55 0 1 .45 1 1s-.45 1-1 1h-1v5.500c0 .28-.22.5-.5.5s-.5-.22-.5-.5V9z" fill="#a7aaad"/></svg>
<svg class="b" style="left:10.10px;top:1178.30px;" width="25" height="25" viewBox="0 0 20 20"><path fill-rule="evenodd" d="M10 2.160c4.330 0 7.840 3.510 7.840 7.840s-3.510 7.840-7.840 7.840S2.160 14.330 2.160 10 5.670 2.160 10 2.160zm2 11.720V6.120L7.680 10z" fill="#a7aaad"/></svg>
<div class="b" style="left:221.8px;top:263.2px;width:1802.4px;height:706.5px;border-radius:20px;background:#fff;border:1px solid #cdd0d2;"></div>
<div class="b" style="left:221.8px;top:999.0px;width:1802.4px;height:356.3px;border-radius:20px;background:#fff;border:1px solid #cdd0d2;"></div>
<div class="b" style="left:221.8px;top:1384.2px;width:1802.4px;height:200.0px;border-radius:20px;background:#fff;border:1px solid #cdd0d2;"></div>
<svg class="b" style="left:252.00px;top:297.00px;" width="24.5" height="24.5" viewBox="0 0 16 16"><g fill="#212529"><path d="M8.515 1.019A7 7 0 0 0 8 1V0a8 8 0 0 1 .589.022zm2.004.45a7 7 0 0 0-.985-.299l.219-.976q.576.129 1.126.342zm1.37.71a7 7 0 0 0-.439-.27l.493-.87a8 8 0 0 1 .979.654l-.615.789a7 7 0 0 0-.418-.302zm1.834 1.79a7 7 0 0 0-.653-.796l.724-.69q.406.429.747.91zm.744 1.352a7 7 0 0 0-.214-.468l.893-.45a8 8 0 0 1 .45 1.088l-.95.313a7 7 0 0 0-.179-.483m.53 2.507a7 7 0 0 0-.1-1.025l.985-.17q.1.58.116 1.17zm-.131 1.538q.05-.254.081-.51l.993.123a8 8 0 0 1-.23 1.155l-.964-.267q.069-.247.12-.501m-.952 2.379q.276-.436.486-.908l.914.405q-.24.54-.555 1.038zm-.964 1.205q.183-.183.35-.378l.758.653a8 8 0 0 1-.401.432z"/><path d="M8 1a7 7 0 1 0 4.95 11.95l.707.707A8.001 8.001 0 1 1 8 0z"/><path d="M7.5 3a.5.5 0 0 1 .5.5v5.21l3.248 1.856a.5.5 0 0 1-.496.868l-3.5-2A.5.5 0 0 1 7 9V3.5a.5.5 0 0 1 .5-.5"/></g></svg>
<span id="t61" class="t" style="left:293.00px;top:309.59px;font-size:23.70px;color:#212529;letter-spacing:0.800px;">Recent Quizzes</span>
<div class="b" style="left:1600.0px;top:292.0px;width:139.0px;height:36.7px;border-radius:15px;border:1.3px solid #6c757d;"></div>
<svg class="b" style="left:1611.00px;top:301.60px;" width="17.5" height="17.5" viewBox="0 0 16 16"><g fill="#6c757d"><path d="M.5 9.9a.5.5 0 0 1 .5.5v2.5a1 1 0 0 0 1 1h12a1 1 0 0 0 1-1v-2.5a.5.5 0 0 1 1 0v2.5a2 2 0 0 1-2 2H2a2 2 0 0 1-2-2v-2.5a.5.5 0 0 1 .5-.5"/><path d="M7.646 11.854a.5.5 0 0 0 .708 0l3-3a.5.5 0 0 0-.708-.708L8.500 10.293V1.500a.5.5 0 0 0-1 0v8.793L5.354 8.146a.5.5 0 1 0-.708.708z"/></g></svg>
<span id="t62" class="t" style="left:1638.00px;top:310.14px;font-size:17.50px;color:#6c757d;letter-spacing:-0.160px;">Export CSV</span>
<div class="b" style="left:1749.0px;top:292.0px;width:123.5px;height:36.7px;border-radius:15px;border:1.3px solid #0d6efd;"></div>
<svg class="b" style="left:1760.00px;top:301.85px;" width="17" height="17" viewBox="0 0 16 16"><g fill="#0d6efd"><path d="M8 15A7 7 0 1 1 8 1a7 7 0 0 1 0 14m0 1A8 8 0 1 0 8 0a8 8 0 0 0 0 16"/><path d="M8 4a.5.5 0 0 1 .5.5v3h3a.5.5 0 0 1 0 1h-3v3a.5.5 0 0 1-1 0v-3h-3a.5.5 0 0 1 0-1h3v-3A.5.5 0 0 1 8 4"/></g></svg>
<span id="t63" class="t" style="left:1787.00px;top:310.14px;font-size:17.50px;color:#0d6efd;letter-spacing:-0.151px;">New Quiz</span>
<div class="b" style="left:1883.0px;top:292.0px;width:111.0px;height:36.7px;border-radius:15px;border:1.3px solid #0d6efd;"></div>
<svg class="b" style="left:1893.50px;top:301.60px;" width="17.5" height="17.5" viewBox="0 0 16 16"><g fill="#0d6efd"><path fill-rule="evenodd" d="M5 11.5a.5.5 0 0 1 .5-.5h9a.5.5 0 0 1 0 1h-9a.5.5 0 0 1-.5-.5m0-4a.5.5 0 0 1 .5-.5h9a.5.5 0 0 1 0 1h-9a.5.5 0 0 1-.5-.5m0-4a.5.5 0 0 1 .5-.5h9a.5.5 0 0 1 0 1h-9a.5.5 0 0 1-.5-.5m-3 1a1 1 0 1 0 0-2 1 1 0 0 0 0 2m0 4a1 1 0 1 0 0-2 1 1 0 0 0 0 2m0 4a1 1 0 1 0 0-2 1 1 0 0 0 0 2"/></g></svg>
<span id="t64" class="t" style="left:1921.20px;top:310.14px;font-size:17.50px;color:#0d6efd;letter-spacing:0.190px;">View All</span>
<div class="b" style="left:252.00px;top:349.30px;width:1742.00px;height:47.50px;background:#f8f9fa;"></div>
<div class="b" style="left:252.00px;top:396.80px;width:1742.00px;height:1.20px;background:#b9bcbf;"></div>
<span id="t65" class="t" style="left:262.00px;top:371.87px;font-size:20.00px;color:#000;font-weight:700;">#</span>
<span id="t66" class="t" style="left:321.40px;top:371.87px;font-size:20.00px;color:#000;font-weight:700;letter-spacing:0.059px;">Title</span>
<span id="t67" class="t" style="left:1141.00px;top:371.87px;font-size:20.00px;color:#000;font-weight:700;letter-spacing:-0.224px;">Total Questions</span>
<span id="t68" class="t" style="left:1390.70px;top:371.87px;font-size:20.00px;color:#000;font-weight:700;letter-spacing:-0.099px;">Participants</span>
<span id="t69" class="t" style="left:1591.00px;top:371.87px;font-size:20.00px;color:#000;font-weight:700;letter-spacing:-0.295px;">Average Score</span>
<span id="t70" class="t" style="left:1825.70px;top:371.87px;font-size:20.00px;color:#000;font-weight:700;letter-spacing:-0.225px;">Status</span>
<div class="b" style="left:252.00px;top:449.30px;width:1742.00px;height:1.00px;background:#dee2e6;"></div>
<span id="t71" class="t" style="left:262.00px;top:423.27px;font-size:20.00px;color:#212529;">1</span>
<span id="t72" class="t" style="left:321.30px;top:423.27px;font-size:20.00px;color:#0d6efd;letter-spacing:0.103px;">FIFA World Cup 2026</span>
<svg class="b" style="left:524.30px;top:417.00px;" width="14.5" height="14.5" viewBox="0 0 16 16"><g fill="#0d6efd"><path d="M15.502 1.94a.5.5 0 0 1 0 .706L14.459 3.69l-2-2L13.502.646a.5.5 0 0 1 .707 0l1.293 1.293zm-1.75 2.456-2-2L4.939 9.21a.5.5 0 0 0-.121.196l-.805 2.414a.25.25 0 0 0 .316.316l2.414-.805a.5.5 0 0 0 .196-.12l6.813-6.814z"/><path fill-rule="evenodd" d="M1 13.5A1.5 1.5 0 0 0 2.5 15h11a1.5 1.5 0 0 0 1.5-1.5v-6a.5.5 0 0 0-1 0v6a.5.5 0 0 1-.5.5h-11a.5.5 0 0 1-.5-.5v-11a.5.5 0 0 1 .5-.5H9a.5.5 0 0 0 0-1H2.5A1.5 1.5 0 0 0 1 2.5z"/></g></svg>
<span id="t73" class="t" style="left:1140.50px;top:423.27px;font-size:20.00px;color:#212529;letter-spacing:-1.750px;">10</span>
<span id="t74" class="t" style="left:1166.60px;top:424.14px;font-size:17.50px;color:#6c757d;letter-spacing:-0.522px;">(1 Pages)</span>
<span id="t75" class="t" style="left:1390.30px;top:423.27px;font-size:20.00px;color:#0d6efd;">1</span>
<span id="t76" class="t" style="left:1591.00px;top:423.27px;font-size:20.00px;color:#212529;letter-spacing:0.984px;">40%</span>
<div class="b" style="left:1826.00px;top:407.90px;width:86.00px;height:31.40px;background:#198754;border-radius:15.700px;"></div>
<span id="t77" class="t" style="left:1837.60px;top:423.30px;font-size:15.00px;color:#fff;font-weight:700;letter-spacing:-0.504px;">On going</span>
<div class="b" style="left:252.00px;top:501.30px;width:1742.00px;height:1.00px;background:#dee2e6;"></div>
<span id="t78" class="t" style="left:262.00px;top:475.27px;font-size:20.00px;color:#212529;">2</span>
<span id="t79" class="t" style="left:321.30px;top:475.27px;font-size:20.00px;color:#0d6efd;letter-spacing:0.200px;">pH Power (Chemistry: Acids &amp;#038; Bases)</span>
<svg class="b" style="left:725.10px;top:469.00px;" width="14.5" height="14.5" viewBox="0 0 16 16"><g fill="#0d6efd"><path d="M15.502 1.94a.5.5 0 0 1 0 .706L14.459 3.69l-2-2L13.502.646a.5.5 0 0 1 .707 0l1.293 1.293zm-1.75 2.456-2-2L4.939 9.21a.5.5 0 0 0-.121.196l-.805 2.414a.25.25 0 0 0 .316.316l2.414-.805a.5.5 0 0 0 .196-.12l6.813-6.814z"/><path fill-rule="evenodd" d="M1 13.5A1.5 1.5 0 0 0 2.5 15h11a1.5 1.5 0 0 0 1.5-1.5v-6a.5.5 0 0 0-1 0v6a.5.5 0 0 1-.5.5h-11a.5.5 0 0 1-.5-.5v-11a.5.5 0 0 1 .5-.5H9a.5.5 0 0 0 0-1H2.5A1.5 1.5 0 0 0 1 2.5z"/></g></svg>
<span id="t80" class="t" style="left:1141.00px;top:476.14px;font-size:17.50px;color:#6c757d;letter-spacing:-0.158px;">(No Page)</span>
<span id="t81" class="t" style="left:1390.30px;top:475.27px;font-size:20.00px;color:#0d6efd;">1</span>
<span id="t82" class="t" style="left:1591.50px;top:475.27px;font-size:20.00px;color:#212529;">%</span>
<div class="b" style="left:1826.00px;top:459.90px;width:99.00px;height:32.20px;background:#ffc107;border-radius:16.100px;"></div>
<span id="t83" class="t" style="left:1837.70px;top:476.30px;font-size:15.00px;color:#1b1e21;font-weight:700;letter-spacing:-0.252px;">Completed</span>
<div class="b" style="left:252.00px;top:554.30px;width:1742.00px;height:1.00px;background:#dee2e6;"></div>
<span id="t84" class="t" style="left:262.00px;top:528.27px;font-size:20.00px;color:#212529;">3</span>
<span id="t85" class="t" style="left:321.30px;top:528.27px;font-size:20.00px;color:#0d6efd;letter-spacing:0.225px;">Magnet Mind (Physics: Magnetism)</span>
<svg class="b" style="left:650.90px;top:522.00px;" width="14.5" height="14.5" viewBox="0 0 16 16"><g fill="#0d6efd"><path d="M15.502 1.94a.5.5 0 0 1 0 .706L14.459 3.69l-2-2L13.502.646a.5.5 0 0 1 .707 0l1.293 1.293zm-1.75 2.456-2-2L4.939 9.21a.5.5 0 0 0-.121.196l-.805 2.414a.25.25 0 0 0 .316.316l2.414-.805a.5.5 0 0 0 .196-.12l6.813-6.814z"/><path fill-rule="evenodd" d="M1 13.5A1.5 1.5 0 0 0 2.5 15h11a1.5 1.5 0 0 0 1.5-1.5v-6a.5.5 0 0 0-1 0v6a.5.5 0 0 1-.5.5h-11a.5.5 0 0 1-.5-.5v-11a.5.5 0 0 1 .5-.5H9a.5.5 0 0 0 0-1H2.5A1.5 1.5 0 0 0 1 2.5z"/></g></svg>
<span id="t86" class="t" style="left:1141.00px;top:529.14px;font-size:17.50px;color:#6c757d;letter-spacing:-0.158px;">(No Page)</span>
<span id="t87" class="t" style="left:1591.50px;top:528.27px;font-size:20.00px;color:#212529;">%</span>
<div class="b" style="left:1826.00px;top:512.90px;width:86.00px;height:31.40px;background:#198754;border-radius:15.700px;"></div>
<span id="t88" class="t" style="left:1837.60px;top:528.30px;font-size:15.00px;color:#fff;font-weight:700;letter-spacing:-0.504px;">On going</span>
<div class="b" style="left:252.00px;top:606.30px;width:1742.00px;height:1.00px;background:#dee2e6;"></div>
<span id="t89" class="t" style="left:262.00px;top:580.27px;font-size:20.00px;color:#212529;">4</span>
<span id="t90" class="t" style="left:321.30px;top:580.27px;font-size:20.00px;color:#0d6efd;letter-spacing:-0.058px;">The Eye Spy (Physics: Human Eye)</span>
<svg class="b" style="left:647.70px;top:574.00px;" width="14.5" height="14.5" viewBox="0 0 16 16"><g fill="#0d6efd"><path d="M15.502 1.94a.5.5 0 0 1 0 .706L14.459 3.69l-2-2L13.502.646a.5.5 0 0 1 .707 0l1.293 1.293zm-1.75 2.456-2-2L4.939 9.21a.5.5 0 0 0-.121.196l-.805 2.414a.25.25 0 0 0 .316.316l2.414-.805a.5.5 0 0 0 .196-.12l6.813-6.814z"/><path fill-rule="evenodd" d="M1 13.5A1.5 1.5 0 0 0 2.5 15h11a1.5 1.5 0 0 0 1.5-1.5v-6a.5.5 0 0 0-1 0v6a.5.5 0 0 1-.5.5h-11a.5.5 0 0 1-.5-.5v-11a.5.5 0 0 1 .5-.5H9a.5.5 0 0 0 0-1H2.5A1.5 1.5 0 0 0 1 2.5z"/></g></svg>
<span id="t91" class="t" style="left:1141.00px;top:581.14px;font-size:17.50px;color:#6c757d;letter-spacing:-0.158px;">(No Page)</span>
<span id="t92" class="t" style="left:1591.50px;top:580.27px;font-size:20.00px;color:#212529;">%</span>
<div class="b" style="left:1826.00px;top:564.90px;width:86.00px;height:31.40px;background:#198754;border-radius:15.700px;"></div>
<span id="t93" class="t" style="left:1837.60px;top:580.30px;font-size:15.00px;color:#fff;font-weight:700;letter-spacing:-0.504px;">On going</span>
<div class="b" style="left:252.00px;top:658.30px;width:1742.00px;height:1.00px;background:#dee2e6;"></div>
<span id="t94" class="t" style="left:262.00px;top:632.27px;font-size:20.00px;color:#212529;">5</span>
<span id="t95" class="t" style="left:321.30px;top:632.27px;font-size:20.00px;color:#0d6efd;letter-spacing:0.209px;">Light Lab (Physics: Light &amp;#038; Optics)</span>
<svg class="b" style="left:695.50px;top:626.00px;" width="14.5" height="14.5" viewBox="0 0 16 16"><g fill="#0d6efd"><path d="M15.502 1.94a.5.5 0 0 1 0 .706L14.459 3.69l-2-2L13.502.646a.5.5 0 0 1 .707 0l1.293 1.293zm-1.75 2.456-2-2L4.939 9.21a.5.5 0 0 0-.121.196l-.805 2.414a.25.25 0 0 0 .316.316l2.414-.805a.5.5 0 0 0 .196-.12l6.813-6.814z"/><path fill-rule="evenodd" d="M1 13.5A1.5 1.5 0 0 0 2.5 15h11a1.5 1.5 0 0 0 1.5-1.5v-6a.5.5 0 0 0-1 0v6a.5.5 0 0 1-.5.5h-11a.5.5 0 0 1-.5-.5v-11a.5.5 0 0 1 .5-.5H9a.5.5 0 0 0 0-1H2.5A1.5 1.5 0 0 0 1 2.5z"/></g></svg>
<span id="t96" class="t" style="left:1141.00px;top:633.14px;font-size:17.50px;color:#6c757d;letter-spacing:-0.158px;">(No Page)</span>
<span id="t97" class="t" style="left:1591.50px;top:632.27px;font-size:20.00px;color:#212529;">%</span>
<div class="b" style="left:1826.00px;top:616.90px;width:86.00px;height:31.40px;background:#198754;border-radius:15.700px;"></div>
<span id="t98" class="t" style="left:1837.60px;top:632.30px;font-size:15.00px;color:#fff;font-weight:700;letter-spacing:-0.504px;">On going</span>
<div class="b" style="left:252.00px;top:711.30px;width:1742.00px;height:1.00px;background:#dee2e6;"></div>
<span id="t99" class="t" style="left:262.00px;top:685.27px;font-size:20.00px;color:#212529;">6</span>
<span id="t100" class="t" style="left:321.30px;top:685.27px;font-size:20.00px;color:#0d6efd;letter-spacing:0.113px;">Gene Genius (Biology: Heredity)</span>
<svg class="b" style="left:622.90px;top:679.00px;" width="14.5" height="14.5" viewBox="0 0 16 16"><g fill="#0d6efd"><path d="M15.502 1.94a.5.5 0 0 1 0 .706L14.459 3.69l-2-2L13.502.646a.5.5 0 0 1 .707 0l1.293 1.293zm-1.75 2.456-2-2L4.939 9.21a.5.5 0 0 0-.121.196l-.805 2.414a.25.25 0 0 0 .316.316l2.414-.805a.5.5 0 0 0 .196-.12l6.813-6.814z"/><path fill-rule="evenodd" d="M1 13.5A1.5 1.5 0 0 0 2.5 15h11a1.5 1.5 0 0 0 1.5-1.5v-6a.5.5 0 0 0-1 0v6a.5.5 0 0 1-.5.5h-11a.5.5 0 0 1-.5-.5v-11a.5.5 0 0 1 .5-.5H9a.5.5 0 0 0 0-1H2.5A1.5 1.5 0 0 0 1 2.5z"/></g></svg>
<span id="t101" class="t" style="left:1141.00px;top:686.14px;font-size:17.50px;color:#6c757d;letter-spacing:-0.158px;">(No Page)</span>
<span id="t102" class="t" style="left:1591.50px;top:685.27px;font-size:20.00px;color:#212529;">%</span>
<div class="b" style="left:1826.00px;top:669.90px;width:86.00px;height:31.40px;background:#198754;border-radius:15.700px;"></div>
<span id="t103" class="t" style="left:1837.60px;top:685.30px;font-size:15.00px;color:#fff;font-weight:700;letter-spacing:-0.504px;">On going</span>
<div class="b" style="left:252.00px;top:763.30px;width:1742.00px;height:1.00px;background:#dee2e6;"></div>
<span id="t104" class="t" style="left:262.00px;top:737.27px;font-size:20.00px;color:#212529;">7</span>
<span id="t105" class="t" style="left:321.30px;top:737.27px;font-size:20.00px;color:#0d6efd;letter-spacing:0.267px;">Neural Network (Biology: Control &amp;#038; Coordination)</span>
<svg class="b" style="left:831.30px;top:731.00px;" width="14.5" height="14.5" viewBox="0 0 16 16"><g fill="#0d6efd"><path d="M15.502 1.94a.5.5 0 0 1 0 .706L14.459 3.69l-2-2L13.502.646a.5.5 0 0 1 .707 0l1.293 1.293zm-1.75 2.456-2-2L4.939 9.21a.5.5 0 0 0-.121.196l-.805 2.414a.25.25 0 0 0 .316.316l2.414-.805a.5.5 0 0 0 .196-.12l6.813-6.814z"/><path fill-rule="evenodd" d="M1 13.5A1.5 1.5 0 0 0 2.5 15h11a1.5 1.5 0 0 0 1.5-1.5v-6a.5.5 0 0 0-1 0v6a.5.5 0 0 1-.5.5h-11a.5.5 0 0 1-.5-.5v-11a.5.5 0 0 1 .5-.5H9a.5.5 0 0 0 0-1H2.5A1.5 1.5 0 0 0 1 2.5z"/></g></svg>
<span id="t106" class="t" style="left:1141.00px;top:738.14px;font-size:17.50px;color:#6c757d;letter-spacing:-0.158px;">(No Page)</span>
<span id="t107" class="t" style="left:1591.50px;top:737.27px;font-size:20.00px;color:#212529;">%</span>
<div class="b" style="left:1826.00px;top:721.90px;width:86.00px;height:31.40px;background:#198754;border-radius:15.700px;"></div>
<span id="t108" class="t" style="left:1837.60px;top:737.30px;font-size:15.00px;color:#fff;font-weight:700;letter-spacing:-0.504px;">On going</span>
<div class="b" style="left:252.00px;top:815.30px;width:1742.00px;height:1.00px;background:#dee2e6;"></div>
<span id="t109" class="t" style="left:262.00px;top:789.27px;font-size:20.00px;color:#212529;">8</span>
<span id="t110" class="t" style="left:321.30px;top:789.27px;font-size:20.00px;color:#0d6efd;letter-spacing:0.203px;">Carbon Codes (Chemistry: Carbon Compounds)</span>
<svg class="b" style="left:767.90px;top:783.00px;" width="14.5" height="14.5" viewBox="0 0 16 16"><g fill="#0d6efd"><path d="M15.502 1.94a.5.5 0 0 1 0 .706L14.459 3.69l-2-2L13.502.646a.5.5 0 0 1 .707 0l1.293 1.293zm-1.75 2.456-2-2L4.939 9.21a.5.5 0 0 0-.121.196l-.805 2.414a.25.25 0 0 0 .316.316l2.414-.805a.5.5 0 0 0 .196-.12l6.813-6.814z"/><path fill-rule="evenodd" d="M1 13.5A1.5 1.5 0 0 0 2.5 15h11a1.5 1.5 0 0 0 1.5-1.5v-6a.5.5 0 0 0-1 0v6a.5.5 0 0 1-.5.5h-11a.5.5 0 0 1-.5-.5v-11a.5.5 0 0 1 .5-.5H9a.5.5 0 0 0 0-1H2.5A1.5 1.5 0 0 0 1 2.5z"/></g></svg>
<span id="t111" class="t" style="left:1141.00px;top:790.14px;font-size:17.50px;color:#6c757d;letter-spacing:-0.158px;">(No Page)</span>
<span id="t112" class="t" style="left:1591.50px;top:789.27px;font-size:20.00px;color:#212529;">%</span>
<div class="b" style="left:1826.00px;top:773.90px;width:86.00px;height:31.40px;background:#198754;border-radius:15.700px;"></div>
<span id="t113" class="t" style="left:1837.60px;top:789.30px;font-size:15.00px;color:#fff;font-weight:700;letter-spacing:-0.504px;">On going</span>
<div class="b" style="left:252.00px;top:868.30px;width:1742.00px;height:1.00px;background:#dee2e6;"></div>
<span id="t114" class="t" style="left:262.00px;top:842.27px;font-size:20.00px;color:#212529;">9</span>
<span id="t115" class="t" style="left:321.30px;top:842.27px;font-size:20.00px;color:#0d6efd;letter-spacing:0.171px;">Reaction Action (Chemistry: Chemical Reactions)</span>
<svg class="b" style="left:776.30px;top:836.00px;" width="14.5" height="14.5" viewBox="0 0 16 16"><g fill="#0d6efd"><path d="M15.502 1.94a.5.5 0 0 1 0 .706L14.459 3.69l-2-2L13.502.646a.5.5 0 0 1 .707 0l1.293 1.293zm-1.75 2.456-2-2L4.939 9.21a.5.5 0 0 0-.121.196l-.805 2.414a.25.25 0 0 0 .316.316l2.414-.805a.5.5 0 0 0 .196-.12l6.813-6.814z"/><path fill-rule="evenodd" d="M1 13.5A1.5 1.5 0 0 0 2.5 15h11a1.5 1.5 0 0 0 1.5-1.5v-6a.5.5 0 0 0-1 0v6a.5.5 0 0 1-.5.5h-11a.5.5 0 0 1-.5-.5v-11a.5.5 0 0 1 .5-.5H9a.5.5 0 0 0 0-1H2.5A1.5 1.5 0 0 0 1 2.5z"/></g></svg>
<span id="t116" class="t" style="left:1141.00px;top:843.14px;font-size:17.50px;color:#6c757d;letter-spacing:-0.158px;">(No Page)</span>
<span id="t117" class="t" style="left:1591.50px;top:842.27px;font-size:20.00px;color:#212529;">%</span>
<div class="b" style="left:1826.00px;top:826.90px;width:86.00px;height:31.40px;background:#198754;border-radius:15.700px;"></div>
<span id="t118" class="t" style="left:1837.60px;top:842.30px;font-size:15.00px;color:#fff;font-weight:700;letter-spacing:-0.504px;">On going</span>
<div class="b" style="left:252.00px;top:920.30px;width:1742.00px;height:1.00px;background:#dee2e6;"></div>
<span id="t119" class="t" style="left:262.00px;top:894.27px;font-size:20.00px;color:#212529;letter-spacing:-1.250px;">10</span>
<span id="t120" class="t" style="left:321.30px;top:894.27px;font-size:20.00px;color:#0d6efd;letter-spacing:0.180px;">English grammar weeky test</span>
<svg class="b" style="left:587.30px;top:888.00px;" width="14.5" height="14.5" viewBox="0 0 16 16"><g fill="#0d6efd"><path d="M15.502 1.94a.5.5 0 0 1 0 .706L14.459 3.69l-2-2L13.502.646a.5.5 0 0 1 .707 0l1.293 1.293zm-1.75 2.456-2-2L4.939 9.21a.5.5 0 0 0-.121.196l-.805 2.414a.25.25 0 0 0 .316.316l2.414-.805a.5.5 0 0 0 .196-.12l6.813-6.814z"/><path fill-rule="evenodd" d="M1 13.5A1.5 1.5 0 0 0 2.5 15h11a1.5 1.5 0 0 0 1.5-1.5v-6a.5.5 0 0 0-1 0v6a.5.5 0 0 1-.5.5h-11a.5.5 0 0 1-.5-.5v-11a.5.5 0 0 1 .5-.5H9a.5.5 0 0 0 0-1H2.5A1.5 1.5 0 0 0 1 2.5z"/></g></svg>
<span id="t121" class="t" style="left:1141.00px;top:895.14px;font-size:17.50px;color:#6c757d;letter-spacing:-0.158px;">(No Page)</span>
<span id="t122" class="t" style="left:1591.50px;top:894.27px;font-size:20.00px;color:#212529;">%</span>
<div class="b" style="left:1826.00px;top:878.90px;width:86.00px;height:31.40px;background:#198754;border-radius:15.700px;"></div>
<span id="t123" class="t" style="left:1837.60px;top:894.30px;font-size:15.00px;color:#fff;font-weight:700;letter-spacing:-0.504px;">On going</span>
<svg class="b" style="left:252.00px;top:1034.00px;" width="24.5" height="24.5" viewBox="0 0 16 16"><g fill="#212529"><path d="M2.5.5A.5.5 0 0 1 3 0h10a.5.5 0 0 1 .5.5q0 .807-.034 1.536a3 3 0 1 1-1.133 5.89c-.79 1.865-1.878 2.777-2.833 3.011v2.173l1.425.356c.194.048.377.135.537.255L13.3 15.1a.5.5 0 0 1-.3.9H3a.5.5 0 0 1-.3-.9l1.838-1.379c.16-.12.343-.207.537-.255L6.5 13.11v-2.173c-.955-.234-2.043-1.146-2.833-3.012a3 3 0 1 1-1.132-5.89A33 33 0 0 1 2.5.5m.099 2.54a2 2 0 0 0 .72 3.935c-.333-1.05-.588-2.346-.72-3.935m10.083 3.935a2 2 0 0 0 .72-3.935c-.133 1.59-.388 2.885-.72 3.935M3.504 1q.01.775.056 1.469c.13 2.028.457 3.546.87 4.667C5.294 9.48 6.484 10 7 10a.5.5 0 0 1 .5.5v2.61a1 1 0 0 1-.757.97l-1.426.356a.5.5 0 0 0-.179.085L4.5 15h7l-.638-.479a.5.5 0 0 0-.18-.085l-1.425-.356a1 1 0 0 1-.757-.97V10.5A.5.5 0 0 1 9 10c.516 0 1.706-.52 2.57-2.864.413-1.12.74-2.64.87-4.667q.045-.694.056-1.469z"/></g></svg>
<span id="t124" class="t" style="left:293.00px;top:1047.19px;font-size:23.70px;color:#212529;letter-spacing:0.922px;">Recent Participants</span>
<div class="b" style="left:1883.0px;top:1029.0px;width:111.0px;height:36.7px;border-radius:15px;border:1.3px solid #0d6efd;"></div>
<svg class="b" style="left:1893.50px;top:1038.60px;" width="17.5" height="17.5" viewBox="0 0 16 16"><g fill="#0d6efd"><path fill-rule="evenodd" d="M5 11.5a.5.5 0 0 1 .5-.5h9a.5.5 0 0 1 0 1h-9a.5.5 0 0 1-.5-.5m0-4a.5.5 0 0 1 .5-.5h9a.5.5 0 0 1 0 1h-9a.5.5 0 0 1-.5-.5m0-4a.5.5 0 0 1 .5-.5h9a.5.5 0 0 1 0 1h-9a.5.5 0 0 1-.5-.5m-3 1a1 1 0 1 0 0-2 1 1 0 0 0 0 2m0 4a1 1 0 1 0 0-2 1 1 0 0 0 0 2m0 4a1 1 0 1 0 0-2 1 1 0 0 0 0 2"/></g></svg>
<span id="t125" class="t" style="left:1921.20px;top:1047.14px;font-size:17.50px;color:#0d6efd;letter-spacing:0.190px;">View All</span>
<div class="b" style="left:252.00px;top:1085.00px;width:1742.00px;height:47.90px;background:#f8f9fa;"></div>
<div class="b" style="left:252.00px;top:1132.80px;width:1742.00px;height:1.20px;background:#b9bcbf;"></div>
<span id="t126" class="t" style="left:262.00px;top:1108.67px;font-size:20.00px;color:#000;font-weight:700;letter-spacing:-0.106px;">Participant</span>
<span id="t127" class="t" style="left:480.30px;top:1108.67px;font-size:20.00px;color:#000;font-weight:700;letter-spacing:-0.381px;">Quiz</span>
<span id="t128" class="t" style="left:1220.30px;top:1108.67px;font-size:20.00px;color:#000;font-weight:700;letter-spacing:-0.348px;">Score</span>
<span id="t129" class="t" style="left:1352.30px;top:1108.67px;font-size:20.00px;color:#000;font-weight:700;letter-spacing:-0.225px;">Status</span>
<span id="t130" class="t" style="left:1495.00px;top:1108.67px;font-size:20.00px;color:#000;font-weight:700;letter-spacing:-0.186px;">Date</span>
<span id="t131" class="t" style="left:1745.00px;top:1108.67px;font-size:20.00px;color:#000;font-weight:700;letter-spacing:-0.344px;">Action</span>
<div class="b" style="left:252.00px;top:1190.00px;width:1742.00px;height:1.00px;background:#dee2e6;"></div>
<span id="t132" class="t" style="left:262.00px;top:1162.17px;font-size:20.00px;color:#212529;letter-spacing:-0.026px;">Admin</span>
<span id="t133" class="t" style="left:480.30px;top:1162.17px;font-size:20.00px;color:#0d6efd;letter-spacing:0.142px;">FIFA World Cup 2026</span>
<span id="t134" class="t" style="left:1220.30px;top:1162.17px;font-size:20.00px;color:#212529;letter-spacing:0.834px;">40%</span>
<div class="b" style="left:1352.30px;top:1152.00px;width:51.70px;height:24.30px;background:#198754;border-radius:12.100px;"></div>
<span id="t135" class="t" style="left:1361.50px;top:1164.00px;font-size:15.00px;color:#fff;font-weight:700;letter-spacing:-0.516px;">Pass</span>
<span id="t136" class="t" style="left:1495.00px;top:1162.17px;font-size:20.00px;color:#212529;letter-spacing:0.166px;">Feb 26, 2026</span>
<div class="b" style="left:1744px;top:1144.0px;width:125.6px;height:36.6px;border-radius:15px;border:1.3px solid #198754;"></div>
<span id="t137" class="t" style="left:1755.70px;top:1161.94px;font-size:17.50px;color:#198754;letter-spacing:-0.043px;">Check Result</span>
<div class="b" style="left:252.00px;top:1247.60px;width:1742.00px;height:1.00px;background:#dee2e6;"></div>
<span id="t138" class="t" style="left:262.00px;top:1219.17px;font-size:20.00px;color:#212529;letter-spacing:-0.026px;">Admin</span>
<span id="t139" class="t" style="left:480.30px;top:1219.17px;font-size:20.00px;color:#0d6efd;letter-spacing:0.278px;">New test quiz</span>
<span id="t140" class="t" style="left:1220.30px;top:1219.17px;font-size:20.00px;color:#212529;letter-spacing:-0.719px;">100%</span>
<div class="b" style="left:1352.30px;top:1209.00px;width:51.70px;height:24.30px;background:#198754;border-radius:12.100px;"></div>
<span id="t141" class="t" style="left:1361.50px;top:1221.00px;font-size:15.00px;color:#fff;font-weight:700;letter-spacing:-0.516px;">Pass</span>
<span id="t142" class="t" style="left:1495.00px;top:1219.17px;font-size:20.00px;color:#212529;letter-spacing:-0.152px;">Feb 18, 2026</span>
<div class="b" style="left:1744px;top:1201.0px;width:125.6px;height:36.6px;border-radius:15px;border:1.3px solid #198754;"></div>
<span id="t143" class="t" style="left:1755.70px;top:1218.94px;font-size:17.50px;color:#198754;letter-spacing:-0.043px;">Check Result</span>
<div class="b" style="left:252.00px;top:1305.20px;width:1742.00px;height:1.00px;background:#dee2e6;"></div>
<span id="t144" class="t" style="left:262.00px;top:1276.17px;font-size:20.00px;color:#212529;letter-spacing:-0.026px;">Admin</span>
<span id="t145" class="t" style="left:480.30px;top:1276.17px;font-size:20.00px;color:#0d6efd;letter-spacing:0.218px;">pH Power (Chemistry: Acids &amp;#038; Bases)</span>
<span id="t146" class="t" style="left:1220.30px;top:1276.17px;font-size:20.00px;color:#212529;">%</span>
<div class="b" style="left:1352.30px;top:1266.00px;width:42.70px;height:24.30px;background:#dc3545;border-radius:12.100px;"></div>
<span id="t147" class="t" style="left:1361.50px;top:1278.00px;font-size:15.00px;color:#fff;font-weight:700;letter-spacing:-0.448px;">Fail</span>
<span id="t148" class="t" style="left:1495.00px;top:1276.17px;font-size:20.00px;color:#212529;letter-spacing:-0.152px;">Feb 18, 2026</span>
<div class="b" style="left:1744px;top:1258.0px;width:125.6px;height:36.6px;border-radius:15px;border:1.3px solid #198754;"></div>
<span id="t149" class="t" style="left:1755.70px;top:1275.94px;font-size:17.50px;color:#198754;letter-spacing:-0.043px;">Check Result</span>
<svg class="b" style="left:252.20px;top:1419.20px;" width="24.5" height="24.5" viewBox="0 0 16 16"><g fill="#212529"><path d="M11 6.5a.5.5 0 0 1 .5-.5h1a.5.5 0 0 1 .5.5v1a.5.5 0 0 1-.5.5h-1a.5.5 0 0 1-.5-.5z"/><path d="M3.5 0a.5.5 0 0 1 .5.5V1h8V.5a.5.5 0 0 1 1 0V1h1a2 2 0 0 1 2 2v11a2 2 0 0 1-2 2H2a2 2 0 0 1-2-2V3a2 2 0 0 1 2-2h1V.5a.5.5 0 0 1 .5-.5M1 4v10a1 1 0 0 0 1 1h12a1 1 0 0 0 1-1V4z"/></g></svg>
<span id="t150" class="t" style="left:293.00px;top:1431.29px;font-size:23.70px;color:#212529;letter-spacing:1.120px;">Upcoming Quizzes</span>
<div class="b" style="left:1883.0px;top:1413.6px;width:111.0px;height:36.7px;border-radius:15px;border:1.3px solid #0d6efd;"></div>
<svg class="b" style="left:1893.50px;top:1423.20px;" width="17.5" height="17.5" viewBox="0 0 16 16"><g fill="#0d6efd"><path fill-rule="evenodd" d="M5 11.5a.5.5 0 0 1 .5-.5h9a.5.5 0 0 1 0 1h-9a.5.5 0 0 1-.5-.5m0-4a.5.5 0 0 1 .5-.5h9a.5.5 0 0 1 0 1h-9a.5.5 0 0 1-.5-.5m0-4a.5.5 0 0 1 .5-.5h9a.5.5 0 0 1 0 1h-9a.5.5 0 0 1-.5-.5m-3 1a1 1 0 1 0 0-2 1 1 0 0 0 0 2m0 4a1 1 0 1 0 0-2 1 1 0 0 0 0 2m0 4a1 1 0 1 0 0-2 1 1 0 0 0 0 2"/></g></svg>
<span id="t151" class="t" style="left:1921.20px;top:1431.74px;font-size:17.50px;color:#0d6efd;letter-spacing:0.190px;">View All</span>
<div class="b" style="left:194px;top:185px;width:1859px;height:90px;overflow:hidden;"><div class="b" style="left:19.5px;top:-10px;width:1820.5px;height:76px;border-radius:20px;background:radial-gradient(ellipse 120px 26px at 1526px 24px,rgba(230,232,237,.42),rgba(226,228,233,0)),linear-gradient(90deg,#f9fafc 0%,#f9fafc 60%,#fdfdfe 70%,#fdfdfe 100%);box-shadow:0 10px 18px rgba(30,41,59,.04);"></div></div>
<div class="b" style="left:233px;top:199px;width:39px;height:38px;border-radius:9px;background:linear-gradient(98deg,#6a0cff 0%,#a92fd0 55%,#ea479b 100%);"></div>
<svg class="b" style="left:242.80px;top:206.90px;" width="19.4" height="19.4" viewBox="0 0 16 16"><g fill="rgba(255,255,255,.9)"><path d="M8.05 9.6c.336 0 .504-.24.554-.627.04-.534.198-.815.847-1.26.673-.475 1.049-1.09 1.049-1.986 0-1.325-.92-2.227-2.262-2.227-1.02 0-1.792.492-2.1 1.29A1.71 1.71 0 0 0 6 5.48c0 .393.203.64.545.64.272 0 .455-.147.564-.51.158-.592.525-.915 1.074-.915.61 0 1.03.446 1.03 1.084 0 .563-.208.885-.822 1.325-.619.433-.926.914-.926 1.64v.111c0 .428.208.745.585.745"/><path d="m10.273 2.513-.921-.944.715-.698.622.637.89-.011a2.89 2.89 0 0 1 2.924 2.924l-.01.89.636.622a2.89 2.89 0 0 1 0 4.134l-.637.622.011.89a2.89 2.89 0 0 1-2.924 2.924l-.89-.01-.622.636a2.89 2.89 0 0 1-4.134 0l-.622-.637-.89.011a2.89 2.89 0 0 1-2.924-2.924l.01-.89-.636-.622a2.89 2.89 0 0 1 0-4.134l.637-.622-.011-.89a2.89 2.89 0 0 1 2.924-2.924l.89.01.622-.636a2.89 2.89 0 0 1 4.134 0l-.715.698a1.89 1.89 0 0 0-2.704 0l-.92.944-1.32-.016a1.89 1.89 0 0 0-1.911 1.912l.016 1.318-.944.921a1.89 1.89 0 0 0 0 2.704l.944.92-.016 1.32a1.89 1.89 0 0 0 1.912 1.911l1.318-.016.921.944a1.89 1.89 0 0 0 2.704 0l.92-.944 1.32.016a1.89 1.89 0 0 0 1.911-1.912l-.016-1.318.944-.921a1.89 1.89 0 0 0 0-2.704l-.944-.92.016-1.32a1.89 1.89 0 0 0-1.912-1.911z"/><path d="M7.001 11a1 1 0 1 1 2 0 1 1 0 0 1-2 0"/></g></svg>
<span id="t152" class="t" style="left:282.30px;top:218.45px;font-size:21.80px;color:#555;letter-spacing:0.408px;background:linear-gradient(90deg,#8a90fa 0%,#b49ce6 42%,#6a6680 62%,#2f3138 100%);-webkit-background-clip:text;background-clip:text;color:transparent;line-height:30px;margin-top:-15px;">QuizFlow</span>
<svg class="b" style="left:1919.60px;top:208.20px;" width="18" height="18" viewBox="0 0 16 16"><g fill="#343a40"><path fill-rule="evenodd" d="M8 3a5 5 0 1 0 4.546 2.914.5.5 0 0 1 .908-.417A6 6 0 1 1 8 2z"/><path d="M8 4.466V.534a.25.25 0 0 1 .41-.192l2.36 1.966c.12.1.12.284 0 .384L8.41 4.658A.25.25 0 0 1 8 4.466"/></g></svg>
<svg class="b" style="left:1978.00px;top:207.50px;" width="19" height="19" viewBox="0 0 16 16"><g fill="#212529"><path d="M7.657 6.247c.11-.33.576-.33.686 0l.645 1.937a2.89 2.89 0 0 0 1.829 1.828l1.936.645c.33.11.33.576 0 .686l-1.937.645a2.89 2.89 0 0 0-1.828 1.829l-.645 1.936a.361.361 0 0 1-.686 0l-.645-1.937a2.89 2.89 0 0 0-1.828-1.828l-1.937-.645a.361.361 0 0 1 0-.686l1.937-.645a2.89 2.89 0 0 0 1.828-1.828zM3.794 1.148a.217.217 0 0 1 .412 0l.387 1.162c.173.518.579.924 1.097 1.097l1.162.387a.217.217 0 0 1 0 .412l-1.162.387A1.73 1.73 0 0 0 4.593 5.69l-.387 1.162a.217.217 0 0 1-.412 0L3.407 5.69A1.73 1.73 0 0 0 2.31 4.593l-1.162-.387a.217.217 0 0 1 0-.412l1.162-.387A1.73 1.73 0 0 0 3.407 2.31zM10.863.099a.145.145 0 0 1 .274 0l.258.774c.115.346.386.617.732.732l.774.258a.145.145 0 0 1 0 .274l-.774.258a1.16 1.16 0 0 0-.732.732l-.258.774a.145.145 0 0 1-.274 0l-.258-.774a1.16 1.16 0 0 0-.732-.732L9.1 2.137a.145.145 0 0 1 0-.274l.774-.258c.346-.115.617-.386.732-.732z"/></g></svg>
<div class="b" style="left:2052.00px;top:185.00px;width:1.00px;height:1255.00px;background:#fff;"></div>
<div class="b" style="left:2053.00px;top:146.00px;width:18.00px;height:1294.00px;background:#2c2c2c;"></div>
<div class="b" style="left:2053.00px;top:146.00px;width:1.00px;height:1294.00px;background:#222;"></div>
<div class="b" style="left:2057.00px;top:710.00px;width:10.00px;height:550.00px;background:#9f9f9f;border-radius:5px;"></div>
<svg class="b" style="left:2055.50px;top:151.00px;" width="13" height="11" viewBox="0 0 13 11"><path d="M6.5 1.800 L11.600 9.200 H1.400Z" fill="#9f9f9f" stroke="#9f9f9f" stroke-width="1.800" stroke-linejoin="round"/></svg>
<svg class="b" style="left:2055.50px;top:1426.00px;" width="13" height="11" viewBox="0 0 13 11"><path d="M6.5 9.200 L11.600 1.800 H1.400Z" fill="#9f9f9f" stroke="#9f9f9f" stroke-width="1.800" stroke-linejoin="round"/></svg>
<div class="b" style="left:2070.00px;top:1.00px;width:1.00px;height:1439.00px;background:#55625f;"></div>
<div class="b" style="left:0.00px;top:1.00px;width:1.00px;height:1439.00px;background:#6b6d6d;"></div>
<div class="b" style="left:0.00px;top:1439.00px;width:2071.00px;height:1.00px;background:#7a7a7a;"></div>
</body></html>
